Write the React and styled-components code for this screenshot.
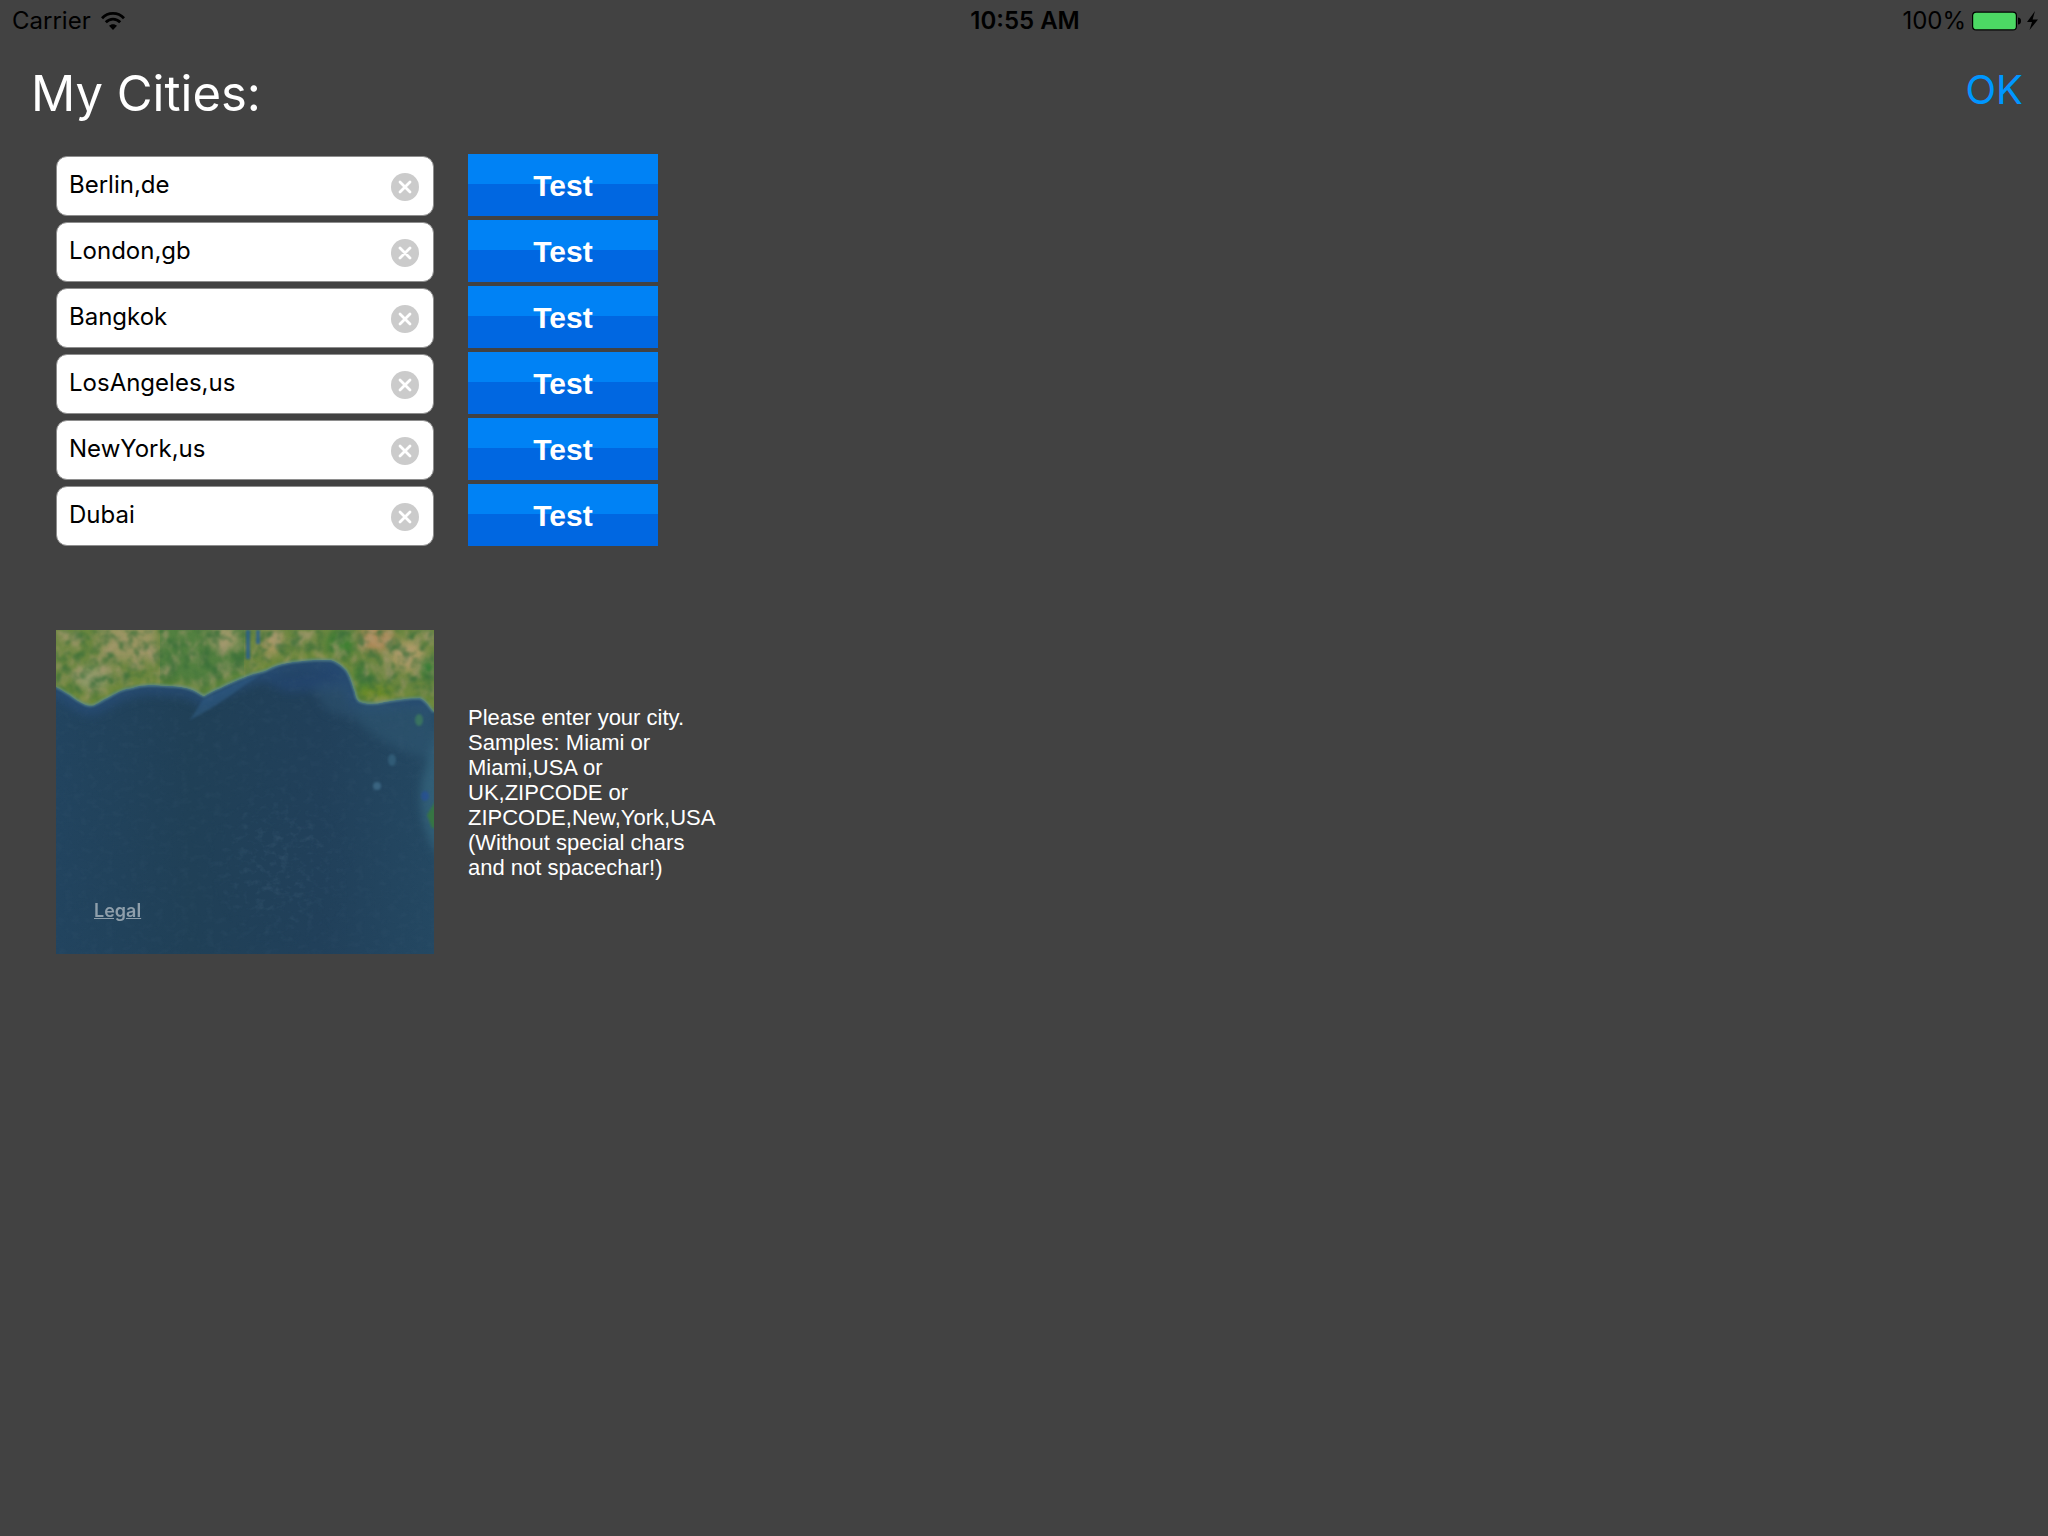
import React, { useState } from 'react'
import styled, { createGlobalStyle } from 'styled-components'

const CITIES = ["Berlin,de", "London,gb", "Bangkok", "LosAngeles,us", "NewYork,us", "Dubai"];

const COAST = "M0 57 C6 60 9 62 14 65 C20 70 24 72 28 74 C33 76 37 76 40 74 C46 71 48 69 51 68 C60 63 66 59 76 58 C84 55 90 55 98 55 L112 56 C124 56 132 58 137 60 C142 62 145 65 148 66 C153 63 158 60 164 58 C172 54 180 50 189 47 C197 43 204 43 211 40 C218 36 224 34 231 33 C240 31 248 31 257 30 L275 30 C282 32 286 36 290 40 C295 47 296 54 299 62 C300 67 301 71 305 72 C312 74 320 74 328 72 C340 70 352 68 364 68 C371 71 373 77 378 82";

const CityField = ({ index, value, onChange }) => (
  <Field>
    <StyledInput type="text"
                 aria-label={"City " + (index + 1)}
                 value={value}
                 onChange={(e) => onChange(index, e.target.value)}
    />
    <ClearButton type="button" aria-label="Clear" onClick={() => onChange(index, "")}>
      <svg width="28" height="28" viewBox="0 0 28 28">
        <circle cx="14" cy="14" r="14" fill="#cbcbcb" />
        <path d="M9 9 L19 19 M19 9 L9 19" stroke="#fff" strokeWidth="2.8" strokeLinecap="round" />
      </svg>
    </ClearButton>
  </Field>
)

const SatelliteMap = () => (
  <Map>
    <MapImage viewBox="0 0 378 324" preserveAspectRatio="none" aria-hidden="true">
      <defs>
        <linearGradient id="sea" x1="0" y1="0" x2="1" y2="0">
          <stop offset="0" stopColor="#22445f" />
          <stop offset="0.35" stopColor="#204057" />
          <stop offset="0.7" stopColor="#21405a" />
          <stop offset="1" stopColor="#244862" />
        </linearGradient>
        <radialGradient id="fade">
          <stop offset="0.3" stopColor="#fff" />
          <stop offset="1" stopColor="#000" />
        </radialGradient>
        <mask id="reef">
          <ellipse cx="225" cy="235" rx="75" ry="85" fill="url(#fade)" />
        </mask>
        <clipPath id="land">
          <path d={COAST + " V0 H0 Z"} />
        </clipPath>
        <filter id="soft" filterUnits="userSpaceOnUse" x="-30" y="-30" width="440" height="390" colorInterpolationFilters="sRGB">
          <feGaussianBlur stdDeviation="5" />
        </filter>
        <filter id="fine" filterUnits="userSpaceOnUse" x="-10" y="-10" width="400" height="350" colorInterpolationFilters="sRGB">
          <feGaussianBlur stdDeviation="1.2" />
        </filter>
        <filter id="tan" x="0" y="0" width="100%" height="100%" colorInterpolationFilters="sRGB">
          <feTurbulence type="fractalNoise" baseFrequency="0.08 0.06" numOctaves="4" seed="8" />
          <feColorMatrix values="0 0 0 0 0.66  0 0 0 0 0.60  0 0 0 0 0.45  3 0 0 0 -1.3" />
          <feGaussianBlur stdDeviation="0.8" />
        </filter>
        <filter id="woods" x="0" y="0" width="100%" height="100%" colorInterpolationFilters="sRGB">
          <feTurbulence type="fractalNoise" baseFrequency="0.09" numOctaves="4" seed="21" />
          <feColorMatrix values="0 0 0 0 0.22  0 0 0 0 0.43  0 0 0 0 0.22  0 3 0 0 -1.3" />
          <feGaussianBlur stdDeviation="0.8" />
        </filter>
        <filter id="waves" x="0" y="0" width="100%" height="100%" colorInterpolationFilters="sRGB">
          <feTurbulence type="fractalNoise" baseFrequency="0.12 0.16" numOctaves="3" seed="4" />
          <feColorMatrix values="0 0 0 0 0.3  0 0 0 0 0.42  0 0 0 0 0.52  1 0 0 0 -0.45" />
          <feGaussianBlur stdDeviation="0.6" />
        </filter>
      </defs>

      <rect width="378" height="324" fill="url(#sea)" />
      <g filter="url(#soft)">
        <path d={COAST} fill="none" stroke="#284d78" strokeWidth="20" opacity="0.7" />
        <path d="M300 72 L378 76 V130 Q330 120 300 90 Z" fill="#2f5672" opacity="0.6" />
        <path d="M205 50 L278 38 L292 60 L230 62 Z" fill="#254778" opacity="0.6" />
        <path d="M255 55 L292 50 L300 90 L270 80 Z" fill="#305573" opacity="0.5" />
        <path d="M385 90 V230 Q360 195 366 150 Z" fill="#34647c" opacity="0.8" />
      </g>
      <path d="M134 90 Q158 78 189 55 L206 44 L189 49 L147 69 Z" fill="#315f88" opacity="0.5" filter="url(#fine)" />
      <rect width="378" height="324" filter="url(#waves)" opacity="0.25" />
      <g mask="url(#reef)">
        <rect width="378" height="324" filter="url(#waves)" opacity="0.5" />
      </g>
      <g filter="url(#fine)">
        <circle cx="321" cy="156" r="4" fill="#3a6480" />
        <ellipse cx="336" cy="130" rx="4" ry="6" fill="#315b76" />
        <ellipse cx="363" cy="90" rx="4" ry="6" fill="#397260" />
        <ellipse cx="369" cy="166" rx="4" ry="5" fill="#27509a" opacity="0.7" />
        <path d="M382 167 L371 185 L376 198 H382 Z" fill="#367543" />
      </g>

      <g clipPath="url(#land)">
        <rect width="378" height="90" fill="#6b8740" />
        <rect x="104" width="84" height="90" fill="#528040" />
        <g filter="url(#soft)">
          <rect x="45" y="-5" width="55" height="36" fill="#9a9562" />
          <ellipse cx="36" cy="48" rx="18" ry="12" fill="#929a6b" />
          <ellipse cx="168" cy="8" rx="16" ry="12" fill="#a29a6b" />
          <ellipse cx="215" cy="12" rx="12" ry="14" fill="#a79860" />
          <ellipse cx="320" cy="8" rx="18" ry="14" fill="#b28c5c" />
          <ellipse cx="352" cy="26" rx="18" ry="16" fill="#b09c68" />
          <ellipse cx="285" cy="14" rx="14" ry="14" fill="#3d8032" />
          <ellipse cx="372" cy="38" rx="9" ry="9" fill="#317a35" />
          <ellipse cx="305" cy="48" rx="9" ry="12" fill="#3f8038" />
          <ellipse cx="318" cy="64" rx="20" ry="8" fill="#6b8b28" />
        </g>
        <rect width="378" height="90" filter="url(#tan)" opacity="0.7" />
        <rect width="378" height="90" filter="url(#woods)" opacity="0.8" />
        <path d="M192 0 V29 M202 0 V14" stroke="#285f91" strokeWidth="4" opacity="0.8" filter="url(#fine)" />
        <path d={COAST} fill="none" stroke="#7c9335" strokeWidth="12" opacity="0.4" filter="url(#soft)" />
      </g>
      <path d={COAST} fill="none" stroke="#5d8c8b" strokeWidth="2.500" opacity="0.8" filter="url(#fine)" />
    </MapImage>
    <LegalLink href="#legal">Legal</LegalLink>
  </Map>
)

const App = () => {
  const [cities, setCities] = useState(CITIES);

  const handleChange = (index, value) => {
    setCities(cities.map((city, i) => (i === index ? value : city)));
  };

  return (
    <Screen>
      <GlobalStyle />
      <StatusBar>
        <StatusGroup>
          Carrier
          <svg width="24" height="18" viewBox="0 0 24 18">
            <g fill="none" stroke="#000" strokeWidth="2.8">
              <path d="M1 6.2 C7 -0.2 17 -0.2 23 6.2" />
              <path d="M4.8 10.2 C9 6 15 6 19.2 10.2" />
            </g>
            <path d="M12 18 L8 13.8 C10 11.6 14 11.6 16 13.8 Z" />
          </svg>
        </StatusGroup>
        <Clock>10:55 AM</Clock>
        <StatusGroup $end>
          100%
          <svg width="66" height="20" viewBox="0 0 66 20">
            <rect x="0.6" y="1.1" width="43.8" height="17.8" rx="3.5" fill="#4cd964" stroke="#000" strokeWidth="1.2" />
            <path d="M46 6.500 C48 6.500 49 8 49 10 C49 12 48 13.500 46 13.500 Z" />
            <path d="M63 0 L55 11 H60 L57.500 19 L66 8.500 H60.600 Z" />
          </svg>
        </StatusGroup>
      </StatusBar>

      <Header>
        <Title>My Cities:</Title>
        <OkButton type="button">OK</OkButton>
      </Header>

      <Content>
        <CityList>
          {cities.map((city, i) => (
            <CityRow key={i}>
              <CityField index={i} value={city} onChange={handleChange} />
              <TestButton type="button">Test</TestButton>
            </CityRow>
          ))}
        </CityList>
        <MapRow>
          <SatelliteMap />
          <Hint>
            Please enter your city. Samples: Miami or Miami,USA or UK,ZIPCODE or
            ZIPCODE,New,York,USA (Without special chars and not spacechar!)
          </Hint>
        </MapRow>
      </Content>
    </Screen>
  )
}

export default App

const GlobalStyle = createGlobalStyle`
  * {
    box-sizing: border-box;
  }
  body {
    margin: 0;
    background-color: #424242;
    font-family: Inter, "Liberation Sans", sans-serif;
  }
`

const Screen = styled.div`
  min-height: 100vh;
  background-color: #424242;
`

const StatusBar = styled.div`
  display: grid;
  grid-template-columns: 1fr auto 1fr;
  align-items: center;
  height: 41px;
  padding: 0 10px 0 12px;
  color: black;
  font-size: 24px;
`

const StatusGroup = styled.div`
  display: flex;
  align-items: center;
  justify-content: ${(props) => (props.$end ? "flex-end" : "flex-start")};
  gap: ${(props) => (props.$end ? "6px" : "10px")};
`

const Clock = styled.div`
  font-weight: 600;
`

const Header = styled.header`
  display: flex;
  align-items: flex-start;
  justify-content: space-between;
  padding: 21px 25px 28px 31px;
`

const Title = styled.h1`
  margin: 0;
  color: white;
  font-size: 49px;
  font-weight: 400;
  line-height: 64px;
`

const OkButton = styled.button`
  border: none;
  padding: 0;
  background: none;
  color: #0096ff;
  font-family: inherit;
  font-size: 40px;
  font-weight: 400;
  line-height: 56px;
  cursor: pointer;
`

const Content = styled.main`
  padding: 0 56px;
`

const CityList = styled.div`
  display: flex;
  flex-direction: column;
  gap: 4px;
`

const CityRow = styled.div`
  display: flex;
  align-items: flex-end;
  gap: 34px;
`

const Field = styled.div`
  display: flex;
  align-items: center;
  width: 378px;
  height: 60px;
  padding: 0 14px 0 12px;
  border: 1px solid #8e8e8e;
  border-radius: 11px;
  background-color: white;
`

const StyledInput = styled.input`
  flex: 1;
  min-width: 0;
  padding: 0 0 4px;
  border: none;
  outline: none;
  background: none;
  color: black;
  font-family: inherit;
  font-size: 24px;
`

const ClearButton = styled.button`
  display: flex;
  padding: 2px 0 0;
  border: none;
  background: none;
  cursor: pointer;
`

const TestButton = styled.button`
  width: 190px;
  height: 62px;
  padding: 2px 0 0;
  border: none;
  background: linear-gradient(#0082f5 30px, #0067e1 30px);
  color: white;
  font-family: "Liberation Sans", Arial, sans-serif;
  font-size: 30px;
  font-weight: bold;
  cursor: pointer;
`

const MapRow = styled.div`
  display: flex;
  align-items: center;
  gap: 34px;
  margin-top: 84px;
`

const Map = styled.div`
  position: relative;
  width: 378px;
  height: 324px;
`

const MapImage = styled.svg`
  display: block;
  width: 100%;
  height: 100%;
`

const LegalLink = styled.a`
  position: absolute;
  left: 38px;
  bottom: 32px;
  color: #8f9fab;
  font-size: 18px;
  font-weight: 600;
  line-height: 22px;
`

const Hint = styled.p`
  width: 250px;
  margin: 0;
  color: white;
  font-family: "Liberation Sans", Arial, sans-serif;
  font-size: 22px;
  line-height: 25px;
`
